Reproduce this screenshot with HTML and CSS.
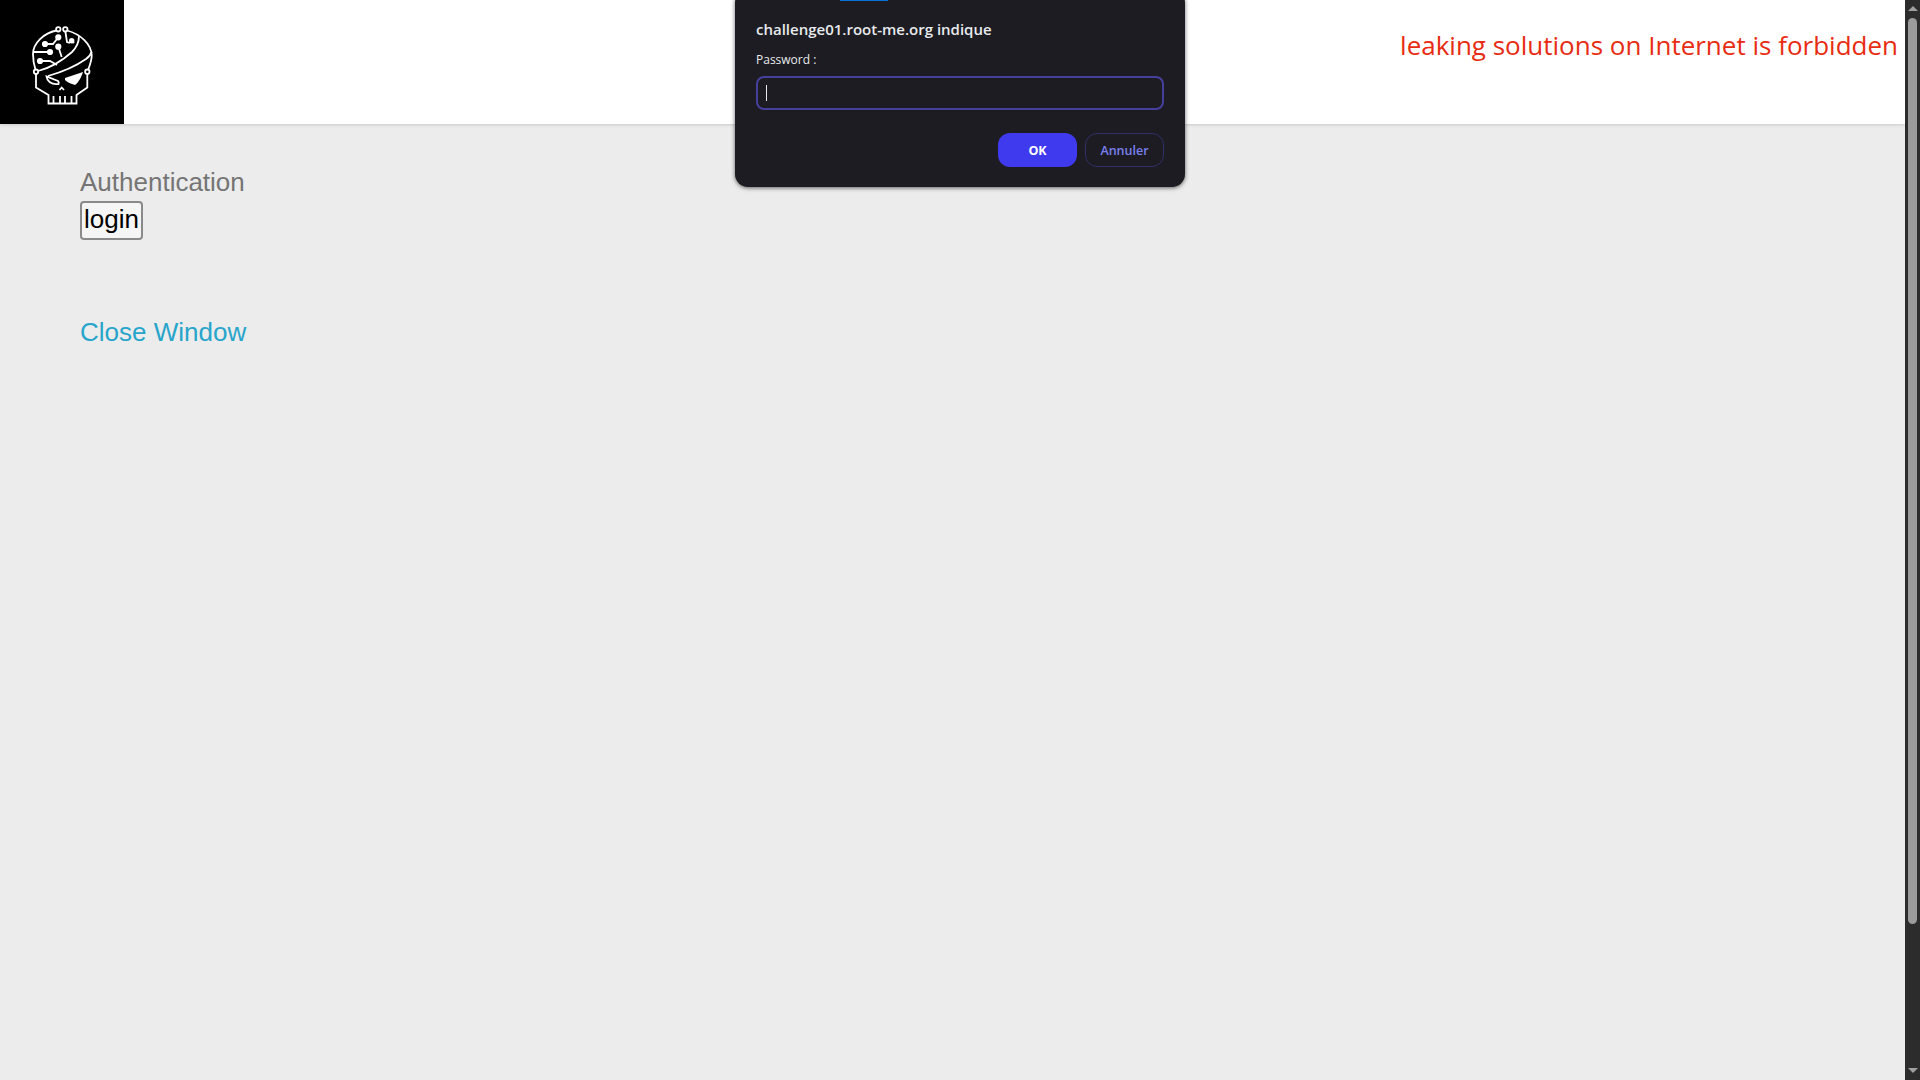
FILE: index.html
```html
<!DOCTYPE html>
<html lang="fr">
<head>
    <meta charset="UTF-8">
    <title>Authentication</title>
    <link rel="stylesheet" href="styles.css">
</head>
<body>
    <div class="page">
        <header class="topbar">
            <div class="logo">
                <svg width="124" height="124" viewBox="0 0 124 124" fill="none" stroke="#fff" stroke-width="1.8">
                    <circle cx="58.300" cy="29.300" r="2.200"/>
                    <circle cx="65.300" cy="29.300" r="2.200"/>
                    <circle cx="36" cy="71.700" r="2.200"/>
                    <circle cx="87.300" cy="71.700" r="2.200"/>
                    <path d="M56.500 30.500C44 33 33 43 33 54C33 60 34 65 35.500 69.700"/>
                    <path d="M67 30.500C80 34 92 44 91.700 56C91.500 61 90 65 88 70"/>
                    <path d="M38 71C50 68 63 60 72 52C78 46 79 40 79 36"/>
                    <path d="M48 76C62 72 76 66 86 59C90 56 91 54 91.500 52"/>
                    <path d="M36 74V87.500L48.500 95V103.500H76.500V95L87.300 87.500V74"/>
                    <path d="M53.500 96V103M60 96V103M65 96V103M71.500 96V103"/>
                    <path d="M59.500 90L61.700 87.500L64 90"/>
                    <path d="M45 44H53L58.300 37.300M33.300 52H50M40 61H50L57 65M58.300 46.700L61.700 57M65.300 31L67 42L70 43M71.700 40.700L74 43"/>
                    <circle cx="45" cy="44" r="2.200" fill="#fff"/>
                    <circle cx="58.300" cy="37.300" r="2.200" fill="#fff"/>
                    <circle cx="50" cy="52" r="2.200" fill="#fff"/>
                    <circle cx="40" cy="61" r="2.200" fill="#fff"/>
                    <circle cx="58.300" cy="46.700" r="2.200" fill="#fff"/>
                    <circle cx="71.700" cy="40.700" r="1.800" fill="#fff"/>
                    <path d="M46.500 76.500C47 81 51 85 58.500 84C59 83 58.500 81.500 58 81L46.500 76.500Z"/>
                    <path d="M65 78L83 72C81 78 78 83 75 85C71 84 67 82 65 80Z" fill="#fff" stroke="none"/>
                </svg>
            </div>
            <p class="warning">leaking solutions on Internet is forbidden</p>
        </header>
        <main class="content">
            <h3 class="auth-title">Authentication</h3>
            <button class="login-btn">login</button>
            <a class="close-link" href="#">Close Window</a>
        </main>
    </div>

    <div class="scrollbar">
        <span class="arrow-up"></span>
        <div class="scroll-track"><div class="scroll-thumb"></div></div>
        <span class="arrow-down"></span>
    </div>

    <div class="dialog">
        <div class="dialog-tab"></div>
        <div class="dialog-title">challenge01.root-me.org indique</div>
        <div class="dialog-label">Password :</div>
        <div class="dialog-input"><span class="caret"></span></div>
        <div class="dialog-buttons">
            <button class="btn-ok">OK</button>
            <button class="btn-cancel">Annuler</button>
        </div>
    </div>
</body>
</html>
```

FILE: styles.css
```css
html, body {
    height: 100%;
}
body {
    margin: 0;
    display: flex;
    height: 1080px;
    overflow: hidden;
    background-color: #ececec;
    font-family: "Liberation Sans", Arial, sans-serif;
}
.page {
    flex: 1;
    min-width: 0;
}
.topbar {
    display: flex;
    justify-content: space-between;
    height: 124px;
    background-color: #fff;
    box-shadow: 0 1px 3px rgba(0, 0, 0, 0.15);
}
.logo {
    width: 124px;
    height: 124px;
    background-color: #000;
}
.warning {
    margin: 27px 7px 0 0;
    font-family: "Open Sans", sans-serif;
    font-size: 26px;
    line-height: 36px;
    color: #e82c12;
}
.content {
    display: flex;
    flex-direction: column;
    align-items: flex-start;
    padding: 43px 0 0 80px;
}
.auth-title {
    margin: 0;
    font-size: 26px;
    font-weight: normal;
    line-height: 30px;
    color: #757575;
}
.login-btn {
    margin-top: 4px;
    padding: 0 2px 2px;
    height: 39px;
    font-family: inherit;
    font-size: 26px;
    color: #000;
    background-color: #f5f5f5;
    border: 2px solid #8a8a8a;
    border-radius: 4px;
}
.close-link {
    margin-top: 77px;
    font-size: 26px;
    line-height: 31px;
    color: #27a5cb;
    text-decoration: none;
}
.scrollbar {
    display: flex;
    flex-direction: column;
    align-items: center;
    width: 15px;
    height: 1080px;
    background-color: #2c2c2c;
}
.arrow-up {
    margin-top: 6px;
    border-left: 5px solid transparent;
    border-right: 5px solid transparent;
    border-bottom: 5px solid #a0a0a0;
}
.arrow-down {
    margin-bottom: 7px;
    border-left: 5px solid transparent;
    border-right: 5px solid transparent;
    border-top: 5px solid #a0a0a0;
}
.scroll-track {
    flex: 1;
    align-self: stretch;
    padding: 7px 3px 0;
}
.scroll-thumb {
    height: 906px;
    background-color: #9b9b9b;
    border-radius: 5px;
}
.dialog {
    position: absolute;
    top: -10px;
    left: 735px;
    box-sizing: border-box;
    width: 450px;
    height: 197px;
    padding: 29px 21px 0;
    color: #e8eaed;
    background-color: #1c1c22;
    border-radius: 13px;
    box-shadow: 0 1px 4px rgba(0, 0, 0, 0.6);
    font-family: "Open Sans", sans-serif;
}
.dialog-tab {
    position: absolute;
    top: 9px;
    left: 105px;
    width: 48px;
    height: 2px;
    background-color: #0a6fd6;
}
.dialog-title {
    font-size: 15px;
    font-weight: 600;
    line-height: 20px;
}
.dialog-label {
    margin-top: 12px;
    font-size: 12px;
    line-height: 18px;
}
.dialog-input {
    display: flex;
    align-items: center;
    box-sizing: border-box;
    height: 34px;
    margin-top: 7px;
    padding-left: 8px;
    border: 2px solid #473f9c;
    border-radius: 8px;
}
.caret {
    width: 1px;
    height: 16px;
    background-color: #e8eaed;
}
.dialog-buttons {
    display: flex;
    justify-content: flex-end;
    gap: 8px;
    margin-top: 23px;
}
.dialog-buttons button {
    box-sizing: border-box;
    width: 79px;
    height: 34px;
    font-family: inherit;
    font-size: 12.5px;
    border-radius: 12px;
}
.btn-ok {
    font-weight: 700;
    color: #fff;
    background-color: #3f3aed;
    border: none;
}
.btn-cancel {
    font-weight: 600;
    color: #7b80f0;
    background-color: transparent;
    border: 1px solid #2f2f6a;
}
```
